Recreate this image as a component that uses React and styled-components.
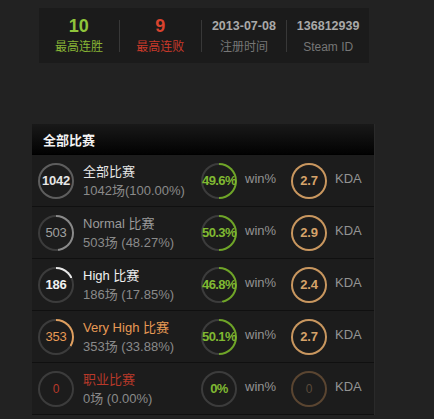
import React from 'react'
import styled, { createGlobalStyle } from 'styled-components'

const GlobalStyle = createGlobalStyle`
  body {
    margin: 0;
    background: #222222;
    font-family: "Liberation Sans", Arial, "Noto Sans CJK SC", sans-serif;
  }
`

const Page = styled.div`
  width: 434px;
  height: 419px;
  padding-top: 8px;
  box-sizing: border-box;
  overflow: hidden;
`

// Style top stat box
const StatBox = styled.div`
  display: flex;
  align-items: center;
  width: 330px;
  height: 55px;
  margin-left: 39px;
  background: #1b1b1b;
`

const StatCell = styled.div`
  width: ${props => props.width}px;
  display: flex;
  flex-direction: column;
  align-items: center;
`

const StatValue = styled.div`
  font-size: ${props => props.size || 18}px;
  font-weight: bold;
  line-height: 20px;
  height: 20px;
  color: ${props => props.color};
`

const StatLabel = styled.div`
  margin-top: 3px;
  font-size: 12px;
  line-height: 16px;
  color: ${props => props.color};
`

const Divider = styled.div`
  width: 1px;
  height: 32px;
  background: #383838;
`

// Style match table
const Table = styled.div`
  width: 343px;
  margin-top: 61px;
  margin-left: 32px;
  background: #1c1c1c;
  border-right: 1px solid #2a2a2a;
  box-sizing: border-box;
`

const Header = styled.div`
  height: 30px;
  display: flex;
  align-items: center;
  padding-left: 11px;
  background: linear-gradient(#191919, #020202);
  border-bottom: 1px solid #000;
  font-size: 13px;
  font-weight: bold;
  color: #f2f2f2;
`

const Row = styled.div`
  display: grid;
  grid-template-columns: 163px 90px 1fr;
  align-items: center;
  height: 51px;
  padding-left: 6px;
  border-bottom: 1px solid #101010;
`

const Cell = styled.div`
  display: flex;
  align-items: center;
`

const Ring = styled.div`
  flex: none;
  width: 36px;
  height: 36px;
  border-radius: 50%;
  display: flex;
  align-items: center;
  justify-content: center;
  background: conic-gradient(${props => props.arc} ${props => props.pct}%, ${props => props.track} 0);
`

const RingInner = styled.div`
  width: 32px;
  height: 32px;
  border-radius: 50%;
  background: #1c1c1c;
  display: flex;
  align-items: center;
  justify-content: center;
  white-space: nowrap;
  font-size: ${props => props.size || 12}px;
  font-weight: ${props => (props.light ? 'normal' : 'bold')};
  color: ${props => props.color};
  letter-spacing: ${props => props.tight ? '-0.6px' : '-0.2px'};
`

const Info = styled.div`
  margin-left: 9px;
  display: flex;
  flex-direction: column;
`

const Title = styled.div`
  font-size: 13px;
  line-height: 19px;
  color: ${props => props.color};
`

const Sub = styled.div`
  font-size: 13px;
  line-height: 19px;
  color: #8a8a8a;
`

const Label = styled.div`
  margin-left: 8px;
  margin-bottom: 4px;
  font-size: 13px;
  color: #939393;
`

const stats = [
  { value: '10', label: '最高连胜', vColor: '#8fc53b', lColor: '#88b535', width: 80 },
  { value: '9', label: '最高连败', vColor: '#d9432e', lColor: '#c9392a', width: 81 },
  { value: '2013-07-08', label: '注册时间', vColor: '#a9a9a9', lColor: '#767676', width: 85, size: 12.5 },
  { value: '136812939', label: 'Steam ID', vColor: '#a9a9a9', lColor: '#767676', width: 82, size: 12.5 }
]

const rows = [
  { count: '1042', title: '全部比赛', sub: '1042场(100.00%)', color: '#e6e6e6', numColor: '#e6e6e6', arc: '#5e5e5e', pct: 100, size: 13, win: '49.6%', winPct: 49.6, kda: '2.7' },
  { count: '503', title: 'Normal 比赛', sub: '503场 (48.27%)', color: '#9a9a9a', numColor: '#a0a0a0', arc: '#8a8a8a', pct: 48.27, size: 13, light: true, win: '50.3%', winPct: 50.3, kda: '2.9' },
  { count: '186', title: 'High 比赛', sub: '186场 (17.85%)', color: '#f0f0f0', numColor: '#f0f0f0', arc: '#e8e8e8', pct: 17.85, size: 13, win: '46.8%', winPct: 46.8, kda: '2.4' },
  { count: '353', title: 'Very High 比赛', sub: '353场 (33.88%)', color: '#e89a55', numColor: '#e89a55', arc: '#e0a060', pct: 33.88, size: 13, light: true, win: '50.1%', winPct: 50.1, kda: '2.7' },
  { count: '0', title: '职业比赛', sub: '0场 (0.00%)', color: '#b8392a', numColor: '#b8392a', arc: '#444', pct: 0, size: 12, light: true, win: '0%', winPct: 0, kda: '0', dim: true }
]

const App = () => (
  <Page>
    <GlobalStyle />
    <StatBox>
      {stats.map((s, i) => (
        <React.Fragment key={s.label}>
          {i > 0 && <Divider />}
          <StatCell width={s.width}>
            <StatValue color={s.vColor} size={s.size}>{s.value}</StatValue>
            <StatLabel color={s.lColor}>{s.label}</StatLabel>
          </StatCell>
        </React.Fragment>
      ))}
    </StatBox>

    <Table>
      <Header>全部比赛</Header>
      {rows.map(r => (
        <Row key={r.title}>
          <Cell>
            <Ring arc={r.arc} pct={r.pct} track='#3c3c3c'>
              <RingInner color={r.numColor} size={r.size} light={r.light}>{r.count}</RingInner>
            </Ring>
            <Info>
              <Title color={r.color}>{r.title}</Title>
              <Sub>{r.sub}</Sub>
            </Info>
          </Cell>
          <Cell>
            <Ring arc='#6fa528' pct={r.winPct} track='#3c3c3c'>
              <RingInner color='#80b932' size={13} tight>{r.win}</RingInner>
            </Ring>
            <Label>win%</Label>
          </Cell>
          <Cell>
            <Ring arc={r.dim ? '#5a4531' : '#c9975f'} pct={100} track='#3c3c3c'>
              <RingInner color={r.dim ? '#5a4a3a' : '#d6a36a'} size={r.dim ? 12 : 13} light={r.dim}>{r.kda}</RingInner>
            </Ring>
            <Label>KDA</Label>
          </Cell>
        </Row>
      ))}
    </Table>
  </Page>
)

export default App
